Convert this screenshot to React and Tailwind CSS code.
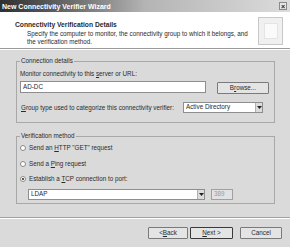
import React from "react";

const F = { fontFamily: '"Liberation Sans", Arial, sans-serif' };

function Radio({ checked }) {
  return (
    <span className="w-[6px] h-[6px] rounded-full border border-[#8a8a8a] bg-white flex items-center justify-center shrink-0">
      {checked ? <span className="w-[2px] h-[2px] rounded-full bg-[#222]" /> : null}
    </span>
  );
}

function DropBtn() {
  return (
    <span className="w-[7px] h-full bg-[#dcdcdc] border-l border-[#b0b0b0] flex items-center justify-center">
      <svg width="5" height="3" viewBox="0 0 5 3"><path d="M0 0h5L2.5 3z" fill="#222" /></svg>
    </span>
  );
}

function Btn({ children, def, w }) {
  return (
    <div className={`${w} h-[12px] bg-[#e4e4e4] rounded-[1px] flex items-center justify-center text-[6.3px] text-[#2a2a2a] ${def ? "border-[1.5px] border-[#3a3a3a]" : "border border-[#7a7a7a]"}`}>
      {children}
    </div>
  );
}

export default function App() {
  return (
    <div style={F} className="w-[290px] h-[247px] bg-[#dadada] flex flex-col overflow-hidden text-[#2a2a2a]">
      <div className="h-[12px] shrink-0 bg-gradient-to-r from-[#2f2f2f] via-[#b4b4b4] to-[#dcdcdc] flex items-center justify-between pl-[2px] pr-[3px]">
        <span className="text-white font-bold text-[7px] leading-none">New Connectivity Verifier Wizard</span>
        <span className="w-[8px] h-[8px] bg-[#e6e6e6] border border-[#8a8a8a] flex items-center justify-center text-[7px] leading-none text-[#222] font-bold">×</span>
      </div>
      <div className="h-[36px] shrink-0 bg-white flex justify-between pl-[15px] pr-[7px]">
        <div className="flex flex-col">
          <span className="mt-[9px] text-[6.7px] font-bold leading-[8px]">Connectivity Verification Details</span>
          <span className="ml-[12px] mt-[1px] text-[6.3px] leading-[8px]">Specify the computer to monitor, the connectivity group to which it belongs, and</span>
          <span className="ml-[12px] text-[6.3px] leading-[8px]">the verification method.</span>
        </div>
        <div className="mt-[5px] w-[25px] h-[28px] border border-[#c8c8c8] bg-[#f0f0f0] flex items-center justify-center">
          <div className="w-[14px] h-[16px] bg-[#fafafa] border border-[#e4e4e4]" />
        </div>
      </div>
      <div className="h-px bg-[#9a9a9a] shrink-0" />
      <div className="h-px bg-white shrink-0" />

      <div className="relative mt-[11px] ml-[16px] mr-[15px] h-[62px] border border-[#a8a8a8] shrink-0 px-[3px] pt-[8px] text-[6.3px]">
        <span className="absolute -top-[5px] left-[3px] px-[1px] bg-[#dadada] leading-[8px]">Connection details</span>
        <div className="leading-[8px]">Monitor connectivity to this <span className="underline">s</span>erver or URL:</div>
        <div className="flex mt-[3px]">
          <div className="w-[186px] h-[12px] bg-white border border-[#8e8e8e] flex items-center pl-[2px] leading-none">AD-DC</div>
          <div className="ml-[11px] mt-[1px]">
            <Btn w="w-[52px]">B<span className="underline">r</span>owse...</Btn>
          </div>
        </div>
        <div className="flex items-center mt-[8px] h-[11px]">
          <span className="w-[163px] pl-[1px] whitespace-nowrap"><span className="underline">G</span>roup type used to categorize this connectivity verifier:</span>
          <div className="w-[80px] h-[11px] bg-white border border-[#8e8e8e] flex items-center justify-between leading-none">
            <span className="pl-[2px]">Active Directory</span>
            <DropBtn />
          </div>
        </div>
      </div>

      <div className="relative mt-[13px] ml-[16px] mr-[15px] h-[68px] border border-[#a8a8a8] shrink-0 pl-[3px] pt-[7px] text-[6.3px]">
        <span className="absolute -top-[5px] left-[3px] px-[1px] bg-[#dadada] leading-[8px]">Verification method</span>
        <div className="flex items-center gap-[3px] h-[8px]"><Radio /><span>Send an <span className="underline">H</span>TTP "GET" request</span></div>
        <div className="flex items-center gap-[3px] h-[8px] mt-[8px]"><Radio /><span>Send a <span className="underline">P</span>ing request</span></div>
        <div className="flex items-center gap-[3px] h-[8px] mt-[7px]"><Radio checked /><span>Establish a <span className="underline">T</span>CP connection to port:</span></div>
        <div className="flex mt-[6px] ml-[8px]">
          <div className="w-[177px] h-[11px] bg-white border border-[#8e8e8e] flex items-center justify-between leading-none">
            <span className="pl-[2px]">LDAP</span>
            <DropBtn />
          </div>
          <div className="ml-[6px] w-[22px] h-[11px] bg-[#e2e2e2] border border-[#a0a0a0] flex items-center pl-[2px] leading-none text-[#9a9a9a]">389</div>
        </div>
      </div>

      <div className="mt-[13px] h-px bg-[#a0a0a0] shrink-0" />
      <div className="h-px bg-white shrink-0" />
      <div className="flex mt-[8px] pl-[148px]">
        <Btn w="w-[40px]">&lt; <span className="underline">B</span>ack</Btn>
        <div className="ml-[2px]"><Btn w="w-[43px]" def><span className="underline">N</span>ext &gt;</Btn></div>
        <div className="ml-[7px]"><Btn w="w-[42px]">Cancel</Btn></div>
      </div>
    </div>
  );
}
